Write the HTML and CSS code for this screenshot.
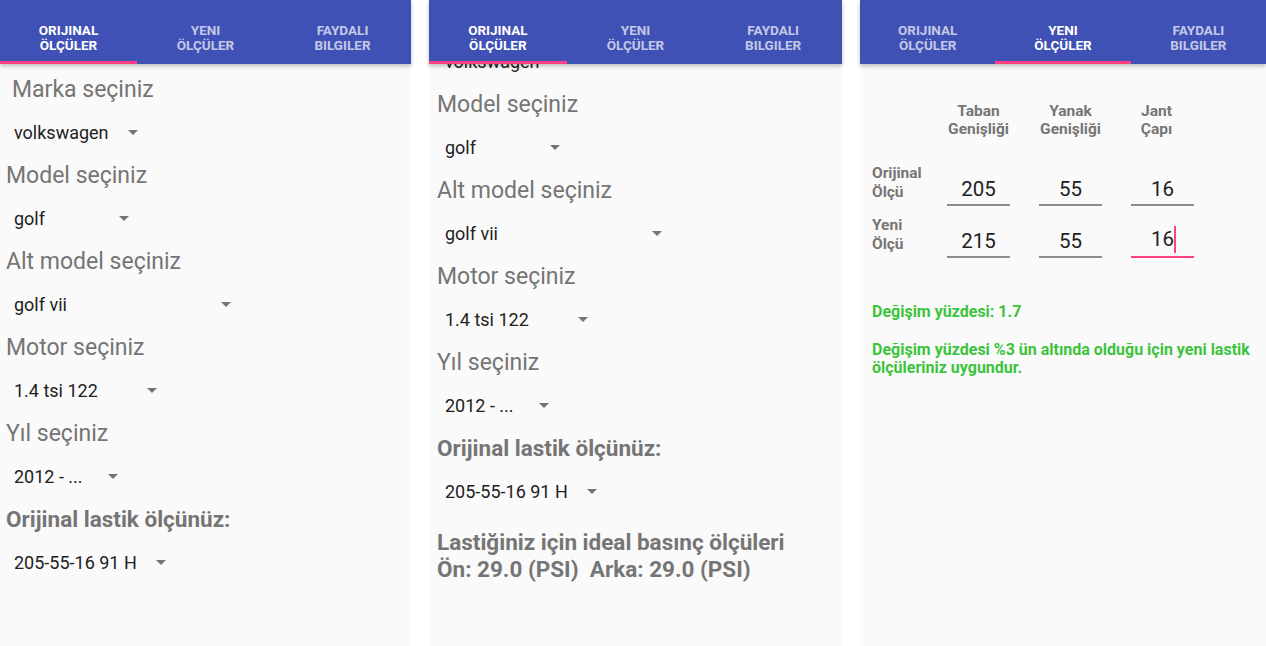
FILE: index.html
```html
<!DOCTYPE html>
<html lang="tr">

<head>
  <meta charset="UTF-8">
  <meta name="viewport" content="width=device-width, initial-scale=1.0">
  <title>Lastik Ölçüleri</title>
  <link rel="stylesheet" href="styles.css">
</head>

<body>
  <!-- Screen 1: original sizes, top of the list -->
  <div class="phone phone-one">
    <div class="app-bar">
      <div class="tab active">ORIJINAL<br>ÖLÇÜLER</div>
      <div class="tab">YENI<br>ÖLÇÜLER</div>
      <div class="tab">FAYDALI<br>BILGILER</div>
    </div>
    <div class="screen">
      <div class="form">
        <div class="label label-first">Marka seçiniz</div>
        <div class="spinner sp-brand"><span>volkswagen</span><i class="arrow"></i></div>
        <div class="label">Model seçiniz</div>
        <div class="spinner sp-model"><span>golf</span><i class="arrow"></i></div>
        <div class="label">Alt model seçiniz</div>
        <div class="spinner sp-sub"><span>golf vii</span><i class="arrow"></i></div>
        <div class="label">Motor seçiniz</div>
        <div class="spinner sp-motor"><span>1.4 tsi 122</span><i class="arrow"></i></div>
        <div class="label">Yıl seçiniz</div>
        <div class="spinner sp-year"><span>2012 - ...</span><i class="arrow"></i></div>
        <div class="label label-bold">Orijinal lastik ölçünüz:</div>
        <div class="spinner sp-tire"><span>205-55-16 91 H</span><i class="arrow"></i></div>
      </div>
    </div>
  </div>

  <!-- Screen 2: same tab, scrolled down -->
  <div class="phone phone-two">
    <div class="app-bar">
      <div class="tab active">ORIJINAL<br>ÖLÇÜLER</div>
      <div class="tab">YENI<br>ÖLÇÜLER</div>
      <div class="tab">FAYDALI<br>BILGILER</div>
    </div>
    <div class="screen">
      <div class="form form-scrolled">
        <div class="label label-first">Marka seçiniz</div>
        <div class="spinner sp-brand"><span>volkswagen</span><i class="arrow"></i></div>
        <div class="label">Model seçiniz</div>
        <div class="spinner sp-model"><span>golf</span><i class="arrow"></i></div>
        <div class="label">Alt model seçiniz</div>
        <div class="spinner sp-sub"><span>golf vii</span><i class="arrow"></i></div>
        <div class="label">Motor seçiniz</div>
        <div class="spinner sp-motor"><span>1.4 tsi 122</span><i class="arrow"></i></div>
        <div class="label">Yıl seçiniz</div>
        <div class="spinner sp-year"><span>2012 - ...</span><i class="arrow"></i></div>
        <div class="label label-bold">Orijinal lastik ölçünüz:</div>
        <div class="spinner sp-tire"><span>205-55-16 91 H</span><i class="arrow"></i></div>
        <p class="pressure">Lastiğiniz için ideal basınç ölçüleri<br>Ön: 29.0 (PSI)&nbsp; Arka: 29.0 (PSI)</p>
      </div>
    </div>
  </div>

  <!-- Screen 3: new sizes -->
  <div class="phone phone-three">
    <div class="app-bar">
      <div class="tab">ORIJINAL<br>ÖLÇÜLER</div>
      <div class="tab active">YENI<br>ÖLÇÜLER</div>
      <div class="tab">FAYDALI<br>BILGILER</div>
    </div>
    <div class="screen screen-sizes">
      <div class="size-grid">
        <div></div>
        <div class="col-head">Taban<br>Genişliği</div>
        <div class="col-head">Yanak<br>Genişliği</div>
        <div class="col-head col-head-last">Jant<br>Çapı</div>

        <div class="row-head">Orijinal<br>Ölçü</div>
        <div class="field">205</div>
        <div class="field">55</div>
        <div class="field">16</div>

        <div class="row-head">Yeni<br>Ölçü</div>
        <div class="field">215</div>
        <div class="field">55</div>
        <div class="field focused">16<span class="caret"></span></div>
      </div>

      <p class="result">Değişim yüzdesi: 1.7</p>
      <p class="result result-note">Değişim yüzdesi %3 ün altında olduğu için yeni lastik ölçüleriniz uygundur.</p>
    </div>
  </div>
</body>

</html>
```

FILE: styles.css
```css
body {
  margin: 0;
  padding: 0;
  background: #fff;
  font-family: Roboto, "Noto Sans", sans-serif;
  display: flex;
  gap: 18px;
  height: 646px;
  overflow: hidden;
}

.phone {
  background: #fafafa;
  display: flex;
  flex-direction: column;
  height: 646px;
  flex: none;
}

.phone-one {
  width: 411px;
}

.phone-two {
  width: 413px;
}

.phone-three {
  width: 406px;
}

/* toolbar with tabs */
.app-bar {
  height: 64px;
  flex: none;
  display: flex;
  background: #3f51b5;
  box-shadow: 0 2px 4px rgba(0, 0, 0, 0.25);
  position: relative;
  z-index: 1;
  box-sizing: border-box;
}

.tab {
  flex: 1;
  display: flex;
  align-items: center;
  justify-content: center;
  text-align: center;
  padding-top: 14px;
  color: rgba(255, 255, 255, 0.7);
  font-size: 13.5px;
  font-weight: bold;
  line-height: 15px;
  border-bottom: 3px solid transparent;
}

.tab.active {
  color: #fff;
  border-bottom-color: #ff4081;
}

.screen {
  flex: 1;
  overflow: hidden;
}

/* spinner list */
.form {
  padding-top: 4px;
}

.form-scrolled {
  margin-top: -71px;
  padding-left: 2px;
}

.label {
  font-size: 23px;
  line-height: 43px;
  padding-left: 6px;
  color: #757575;
}

.label-first {
  padding-left: 12px;
}

.label-bold {
  font-size: 22.5px;
  font-weight: bold;
}

.spinner {
  height: 43px;
  display: flex;
  align-items: center;
  padding-left: 14px;
  box-sizing: border-box;
  font-size: 18px;
  color: #212121;
}

.arrow {
  margin-left: auto;
  width: 0;
  height: 0;
  border-left: 5px solid transparent;
  border-right: 5px solid transparent;
  border-top: 5px solid #757575;
}

.sp-brand { width: 138px; }
.sp-model { width: 129px; }
.sp-sub { width: 231px; }
.sp-motor { width: 157px; }
.sp-year { width: 118px; }
.sp-tire { width: 166px; }

.pressure {
  margin: 16px 0 0;
  padding-left: 6px;
  font-size: 22.5px;
  font-weight: bold;
  line-height: 27px;
  color: #757575;
}

/* new sizes tab */
.screen-sizes {
  padding: 38px 4px 0 12px;
}

.size-grid {
  display: grid;
  grid-template-columns: 46px repeat(3, 63px);
  column-gap: 29px;
  row-gap: 10px;
  align-items: end;
}

.col-head {
  text-align: center;
  font-size: 15.5px;
  font-weight: bold;
  line-height: 18px;
  color: #757575;
  margin-bottom: 16px;
  white-space: nowrap;
}

.col-head-last {
  padding-right: 12px;
}

.row-head {
  font-size: 15.5px;
  font-weight: bold;
  line-height: 19px;
  color: #757575;
  margin-bottom: 4px;
  white-space: nowrap;
}

.field {
  text-align: center;
  font-size: 20.5px;
  line-height: 24px;
  padding-bottom: 3px;
  border-bottom: 2px solid #8c8c8c;
  color: #212121;
}

.field.focused {
  border-bottom-color: #ff4081;
}

.caret {
  display: inline-block;
  width: 2px;
  height: 27px;
  margin-right: -2px;
  vertical-align: -7px;
  background: #ff4081;
}

.result {
  margin: 45px 0 0;
  font-size: 16px;
  font-weight: bold;
  line-height: 18px;
  color: #3cc43c;
}

.result-note {
  margin-top: 20px;
}
```
